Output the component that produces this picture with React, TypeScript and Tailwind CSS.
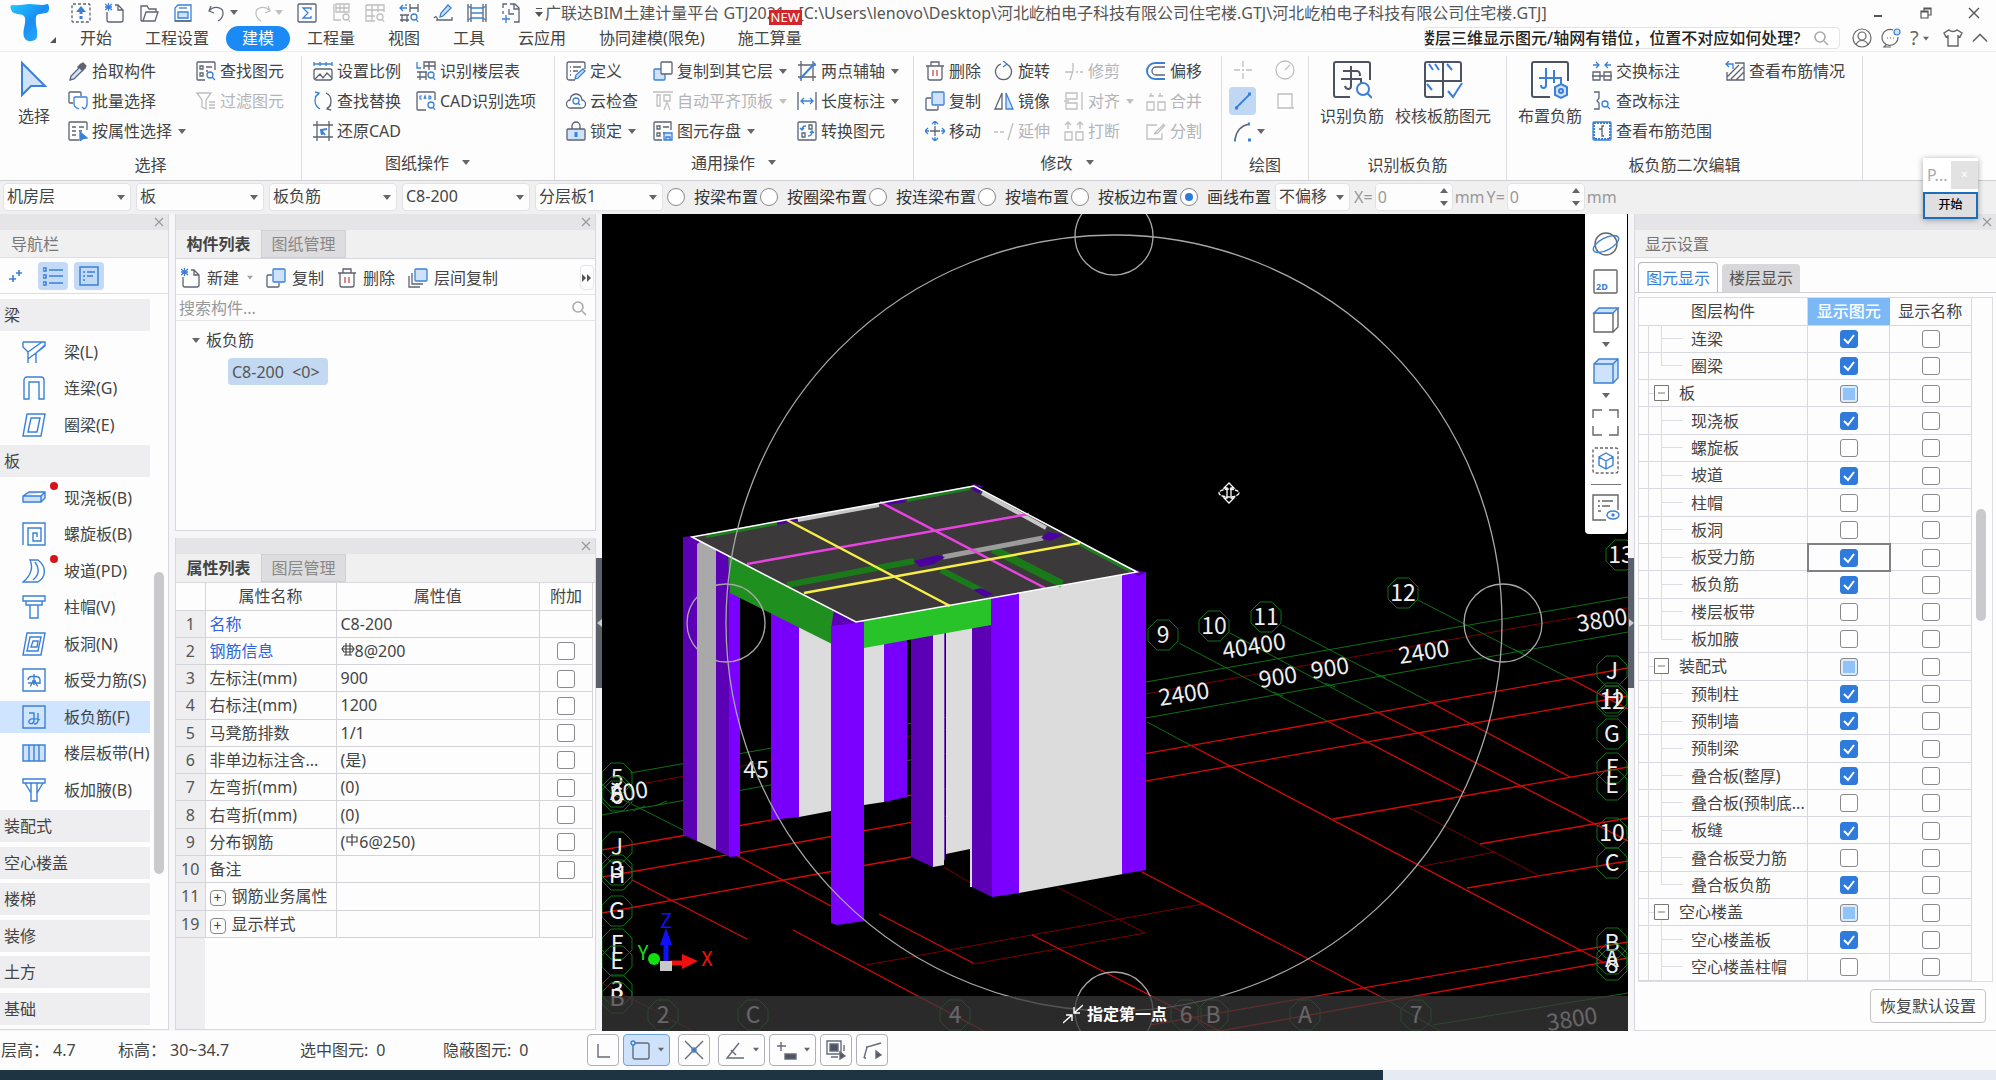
import { useState, type ReactNode } from "react"
import clsx from "clsx"

const BLUE = "#3a80d8"
const PALE = "#cfe2fb"

const icons: Record<string, ReactNode> = {
  upload: (
    <>
      <rect x="1" y="1" width="18" height="18" rx="1" strokeDasharray="3 2" />
      <path d="M10 16v-3M10 11V8" stroke={BLUE} strokeWidth="3" />
      <path d="M5 9l5-6 5 6z" fill={BLUE} stroke="none" />
    </>
  ),
  newFile: (
    <>
      <path d="M2 9v8a2 2 0 0 0 2 2h12a2 2 0 0 0 2-2V7l-5-5h-3M13 2v5h5" />
      <path d="M0 1l7 6M7 1L0 7M3.5 0v8M0 4h7" stroke={BLUE} />
    </>
  ),
  open: <path d="M2 18V3h6l2 3h7v3M2 18h14l3-9H7L4 18" />,
  save: (
    <>
      <path d="M2 18V5l3-3h13v16z" stroke={BLUE} />
      <path d="M5 9h10v6H5z" fill={PALE} stroke={BLUE} />
      <path d="M6 5h8" stroke={BLUE} />
      <path d="M2 18h16" />
    </>
  ),
  undo: <path d="M4 3L2 8l5 2M2 8c5-6 15-4 14 3-.5 4-3 6-5 7" />,
  redo: <path d="M16 3l2 5-5 2M18 8C13 2 3 4 4 11c.5 4 3 6 5 7" />,
  sigma: (
    <>
      <rect x="1" y="1" width="18" height="18" rx="1" />
      <path d="M14 7V5H6l5 5-5 5h8v-2" stroke={BLUE} />
    </>
  ),
  report: (
    <>
      <path d="M3 1v16h7M5 1h13v8H5zM9 1v8M13 1v8M5 5h13" />
      <circle cx="15" cy="14" r="3" />
      <path d="M17 16l2 3" />
    </>
  ),
  grid: (
    <>
      <path d="M1 2h18v7M1 2v16h9M1 7h18M1 13h9M7 2v16M13 2v7" />
      <circle cx="15" cy="14" r="3" />
      <path d="M17 16l2 3" />
    </>
  ),
  viewSearch: (
    <>
      <path d="M11 9V1M19 9V1M11 5h8M1 12h9M3 19v-7M8 19v-7M1 17h9" />
      <path d="M1 5h7M4 2L1 5l3 3M7 1v2" stroke={BLUE} />
      <circle cx="15" cy="14" r="3" stroke={BLUE} />
      <path d="M17 16l2 3" stroke={BLUE} />
    </>
  ),
  pen: (
    <>
      <path d="M7 14l1-4 7-8 3 3-8 8z" stroke={BLUE} fill={PALE} />
      <path d="M1 15c2-3 4 0 3 2h15v-3" />
    </>
  ),
  film: (
    <>
      <path d="M4 1v18M16 1v18M1 1v18M19 1v18" />
      <path d="M4 5h12M4 10h12M4 15h12M1 3l3 2M16 5l3-2M1 17l3-2M16 15l3 2" stroke={BLUE} />
    </>
  ),
  addFile: (
    <>
      <path d="M6 1H2v4M2 8v3M9 1h5l4 4v14h-5M13 1v5h5" />
      <path d="M5 12v8M1 16h8" stroke={BLUE} />
      <path d="M8 6v5h5" />
    </>
  ),
  picker: (
    <>
      <path d="M12 3l5 5M10 5l5 5" strokeWidth="3" />
      <path d="M15 2l3 3-3 3-3-3z" fill="currentColor" />
      <path d="M11 7l-8 8-1 4 4-1 8-8" fill={PALE} />
    </>
  ),
  batch: (
    <>
      <path d="M5 12H2a1 1 0 0 1-1-1V2a1 1 0 0 1 1-1h10a1 1 0 0 1 1 1v3" />
      <path d="M11 18c-3-1-5-2-5-5V7a1 1 0 0 1 1-1h11a1 1 0 0 1 1 1v6c0 3-1 4-3 5l-2-2" stroke={BLUE} />
    </>
  ),
  byProp: (
    <>
      <path d="M11 19H2a1 1 0 0 1-1-1V2a1 1 0 0 1 1-1h16a1 1 0 0 1 1 1v7M4 6h4M11 6h5M4 10h4M11 10h3M4 14h4" />
      <path d="M12 11l7 6-4 .500-3 2.500z" fill={BLUE} stroke={BLUE} />
    </>
  ),
  findItem: (
    <>
      <path d="M9 19H2a1 1 0 0 1-1-1V2a1 1 0 0 1 1-1h16a1 1 0 0 1 1 1v7M4 5h3v3H4zM4 12h3v3H4zM10 6h6M10 10h2" />
      <circle cx="14" cy="14" r="3" stroke={BLUE} />
      <path d="M16 16l3 3" stroke={BLUE} />
    </>
  ),
  filter: <path d="M1 2h14l-5 7v9l-4-2V9zM13 11h6M13 14h6M13 17h6" />,
  scale: (
    <>
      <rect x="1" y="8" width="18" height="11" rx="2" />
      <path d="M2 18l5-5 3 4 4-5 5 5" />
      <path d="M1 1v4M19 1v4M1 3h18M7 1v4M13 1v4" stroke={BLUE} />
    </>
  ),
  replace: (
    <>
      <path d="M13 2c7 3 6 13 1 15M18 14l-4 4 4 1" />
      <path d="M7 18C0 14 1 5 6 3M2 6l4-4-4-1" stroke={BLUE} />
    </>
  ),
  restoreCad: (
    <>
      <path d="M4 0v20M16 0v4M0 4h20M0 16h20M16 4v16" />
      <path d="M9 14l-1-5 6-1M8 9l4 5" stroke={BLUE} strokeWidth="2" />
    </>
  ),
  floorTable: (
    <>
      <path d="M8 8V1h11v8M8 5h11M13 1v8M1 11h10M4 11v8M1 16h9M10 11v8" />
      <path d="M1 1v6h4" stroke={BLUE} />
      <circle cx="15" cy="14" r="3" stroke={BLUE} />
      <path d="M17 16l2 3" stroke={BLUE} />
    </>
  ),
  cad: (
    <>
      <path d="M10 19H2a1 1 0 0 1-1-1V2a1 1 0 0 1 1-1h16a1 1 0 0 1 1 1v7" />
      <path d="M6 5H4v3h2M8 8l1-3 1 3M13 5v3h1q2-1.500 0-3z" stroke={BLUE} strokeWidth="1.200" />
      <circle cx="15" cy="14" r="3" stroke={BLUE} />
      <path d="M17 16l2 3" stroke={BLUE} />
    </>
  ),
  define: (
    <>
      <path d="M9 19H3a2 2 0 0 1-2-2V3a2 2 0 0 1 2-2h14a2 2 0 0 1 2 2v5M4 6h1M7 6h8M4 10h1M7 10h5M4 14h1" />
      <path d="M9 18l1-4 7-6 2 2-7 7z" stroke={BLUE} fill={PALE} />
    </>
  ),
  cloud: (
    <>
      <path d="M5 17a4 4 0 0 1-1-8 6 6 0 0 1 12 0 4 4 0 0 1-1 8z" />
      <circle cx="10" cy="10" r="3" stroke={BLUE} />
      <path d="M12 12l2 2" stroke={BLUE} />
    </>
  ),
  lock: (
    <>
      <path d="M6 8V5a4 4 0 0 1 8 0v3" />
      <rect x="1" y="8" width="18" height="11" rx="1" fill={PALE} />
      <path d="M10 11v5" stroke={BLUE} strokeWidth="3" />
    </>
  ),
  copyFloor: (
    <>
      <rect x="1" y="8" width="11" height="11" rx="1" fill={PALE} stroke={BLUE} />
      <rect x="8" y="1" width="11" height="12" rx="1" fill="#fff" />
    </>
  ),
  alignTop: <path d="M0 1h20M4 4h3v11H4zM11 4h6v6h-6zM11 19l3-8 3 8" />,
  saveItem: (
    <>
      <path d="M9 19H2a1 1 0 0 1-1-1V2a1 1 0 0 1 1-1h16v8M4 5h3v3H4zM4 12h3v3H4zM10 6h6M10 12h2" />
      <path d="M11 12h8v7h-8zM13 19v-3h4v3" stroke={BLUE} fill={PALE} />
    </>
  ),
  twoAxis: (
    <>
      <path d="M4 0v20M16 0v20M1 4h18M1 16h18" />
      <path d="M3 18L18 2" stroke={BLUE} strokeWidth="2" />
    </>
  ),
  length: (
    <>
      <path d="M1 1v18M19 1v18" />
      <path d="M4 10h12M7 7l-3 3 3 3M13 7l3 3-3 3" stroke={BLUE} />
    </>
  ),
  convert: (
    <>
      <rect x="1" y="1" width="18" height="18" rx="1" />
      <path d="M12 4h3v4h-3zM5 12h3v4H5z" />
      <path d="M9 5c-3 0-4 1-4 4M3 7l2 2 2-2M11 15c3 0 4-1 4-4M13 12l2-2 2 2" stroke={BLUE} />
    </>
  ),
  trash: (
    <>
      <path d="M1 5h18M6 5V1h8v4M3 5v12a2 2 0 0 0 2 2h10a2 2 0 0 0 2-2V5" />
      <path d="M8 9v6M12 9v6" stroke="#c94a4a" />
    </>
  ),
  copy: (
    <>
      <path d="M6 7H2a1 1 0 0 0-1 1v10a1 1 0 0 0 1 1h10a1 1 0 0 0 1-1v-3" />
      <rect x="7" y="1" width="12" height="13" rx="1" fill={PALE} stroke={BLUE} />
    </>
  ),
  layerCopy: (
    <>
      <path d="M1 8v11h11M4 5v11h11" />
      <rect x="7" y="1" width="12" height="12" rx="1" fill={PALE} stroke={BLUE} />
    </>
  ),
  move: (
    <>
      <path d="M10 5v10M5 10h10" />
      <path d="M10 0v4M7 3l3-3 3 3M10 20v-4M7 17l3 3 3-3M0 10h4M3 7l-3 3 3 3M20 10h-4M17 7l3 3-3 3" stroke={BLUE} />
    </>
  ),
  rotate: (
    <>
      <path d="M12 3a8 8 0 1 1-5 0" />
      <path d="M9 0l4 3-4 3" stroke={BLUE} />
    </>
  ),
  mirror: (
    <>
      <path d="M8 2v16H1z" />
      <path d="M12 2v16h7z" fill={PALE} stroke={BLUE} />
    </>
  ),
  trim: <path d="M1 11h8M12 11h2M16 11h3M9 2v8L6 19" />,
  extend: <path d="M0 11h4M6 11h4M19 2l-5 17" />,
  align: <path d="M2 2h11v6H2zM2 12h11v6H2zM18 1v18M0 10h5" />,
  breakIt: <path d="M1 11h7v8H1zM12 11h7v8h-7zM4 2v6M16 2v6M1 4l3-3 3 3M13 4l3-3 3 3" />,
  offset: (
    <>
      <path d="M19 2H9a7 7 0 0 0 0 16h10" stroke={BLUE} strokeWidth="2" />
      <path d="M19 6H10a4 4 0 0 0 0 8h9" />
    </>
  ),
  merge: <path d="M1 11h7v8H1zM12 11h7v8h-7zM5 2v3M14 2v3M3 5h5M12 5h5" />,
  split: <path d="M11 4H1v14h15v-6M8 13L18 3M8 13l4-1 7-8" />,
  swap: (
    <>
      <path d="M1 11h7v8H1zM12 11h7v8h-7zM0 15h20" />
      <path d="M1 4h6M4 1l3 3-3 3M19 4h-6M16 1l-3 3 3 3" stroke={BLUE} />
    </>
  ),
  checkMark: (
    <>
      <path d="M2 1h5v6l-2 3 2 2v6H2" />
      <circle cx="13" cy="13" r="3" stroke={BLUE} />
      <path d="M15 15l3 3" stroke={BLUE} />
    </>
  ),
  range: (
    <>
      <rect x="1" y="1" width="18" height="18" rx="1" stroke={BLUE} />
      <rect x="2" y="2" width="16" height="16" stroke={BLUE} strokeWidth="2" strokeDasharray="2 1" />
      <path d="M12 5h-2v10h2M7 8h3" />
    </>
  ),
  rebarView: (
    <>
      <path d="M10 2h9v17H2v-8M6 18L18 6M11 19l8-8M2 16l12-12" />
      <path d="M1 3h7v5M4 0L1 3l3 3" stroke={BLUE} />
    </>
  ),
  pointTool: <path d="M10 1v6M10 13v6M1 10h6M13 10h6M9 10h2" />,
  circleTool: (
    <>
      <circle cx="10" cy="10" r="9" />
      <path d="M10 10l5-5" />
    </>
  ),
  lineTool: (
    <>
      <path d="M3 17L17 3" stroke={BLUE} strokeWidth="1.8" />
      <path d="M2 17h3M15 3h3" stroke={BLUE} strokeWidth="3" />
    </>
  ),
  rectTool: <path d="M3 3h14v14H3zM3 15v3M15 17h4" />,
  arcTool: (
    <>
      <path d="M2 18C3 9 7 4 16 2" />
      <path d="M1 18h2M15 2h2M15 18h3" stroke={BLUE} strokeWidth="3" />
    </>
  ),
}

const bigIcons: Record<string, ReactNode> = {
  cursor: <path d="M8 3v32l9-9h14z" fill={PALE} stroke={BLUE} />,
  recognize: (
    <>
      <path d="M18 37H4a2 2 0 0 1-2-2V4a2 2 0 0 1 2-2h32a2 2 0 0 1 2 2v16M11 11h14c2 0 3 2 3 5M9 19h20v5M19 6v20c0 4-5 4-6 0" />
      <circle cx="31" cy="29" r="6" stroke={BLUE} />
      <path d="M35 33l5 5" stroke={BLUE} />
    </>
  ),
  verify: (
    <>
      <path d="M20 37H4a2 2 0 0 1-2-2V4a2 2 0 0 1 2-2h32a2 2 0 0 1 2 2v17H2M20 2v35" />
      <path d="M6 4l4 6M12 4l4 6M24 4l5 6M4 24l5 6M25 31l5 6 9-14" stroke={BLUE} />
    </>
  ),
  place: (
    <>
      <path d="M20 37H4a2 2 0 0 1-2-2V4a2 2 0 0 1 2-2h32a2 2 0 0 1 2 2v17" />
      <path d="M9 18h22v6M16 8v17c0 4-5 4-5 0M24 10v13" stroke={BLUE} />
      <path d="M31 24l6 3v8l-6 3-6-3v-8z" stroke={BLUE} fill={PALE} />
      <circle cx="31" cy="31" r="2" stroke={BLUE} />
    </>
  ),
}

const navIcons: Record<string, ReactNode> = {
  beam: <path d="M1 2h22v4l-9 7v10M1 2v5l5 5v11M6 12L20 2M14 13l9-8M6 19l8-6" />,
  link: <path d="M2 23V4a3 3 0 0 1 3-3h14a3 3 0 0 1 3 3v19h-5V6H7v17z" />,
  ring: <path d="M5 1h18l-4 22H1zM9 5h9l-3 14H6z" />,
  slab: <path d="M1 10l6-4h16v6l-4 4H1zM1 10h18l4-4M19 10v6" fill={PALE} />,
  spiral: <path d="M1 23V1h22v22H6V6h13v13h-8v-8h4v4" />,
  ramp: <path d="M8 1h8c9 7 8 17 0 22H1C10 16 11 7 8 1zM13 3c5 7 4 13-2 18" />,
  cap: <path d="M1 1h22v5H1zM4 6v4h16V6M8 10v13h8V10" />,
  hole: <path d="M5 1h18l-4 22H1zM8 5h11l-3 14H5zM11 9h5l-1 6H9z" />,
  force: <path d="M1 1h22v22H1zM6 12c0-5 12-5 12 0v4M12 6v11M6 15h12M8 18c2 0 2-6 4-6s2 6 4 6" />,
  negative: <path d="M1 1h22v22H1zM7 8h5v8c-1 4-6 3-5 0s8-3 11-1M16 8v7c0 3-2 4-4 4" />,
  strip: <path d="M1 4h22v16H1zM12 4v16M7 4v16M17 4v16" fill={PALE} />,
  haunch: <path d="M1 1h22v4H1zM3 5l6 10M21 5l-6 10M9 5v18h6V5" />,
}

const Icon = ({ name, disabled }: { name: string; disabled?: boolean }) => (
  <svg
    viewBox="0 0 20 20"
    className={clsx("h-5 w-5 shrink-0 text-[#5d6372]", disabled && "opacity-40 grayscale")}
    fill="none"
    stroke="currentColor"
    strokeWidth="1.3"
    aria-hidden
  >
    {icons[name]}
  </svg>
)

const BigIcon = ({ name }: { name: string }) => (
  <svg viewBox="0 0 40 40" className="h-10 w-10 text-[#4d5362]" fill="none" stroke="currentColor" strokeWidth="2" aria-hidden>
    {bigIcons[name]}
  </svg>
)

const Caret = ({ className }: { className?: string }) => (
  <svg viewBox="0 0 8 5" className={clsx("h-[5px] shrink-0 fill-[#666]", className ?? "w-2")} aria-hidden>
    <path d="M0 0h8L4 5z" />
  </svg>
)

const CloseIcon = () => (
  <svg viewBox="0 0 10 10" className="h-2.5 w-2.5 stroke-[#999]" strokeWidth="1.2" aria-hidden>
    <path d="M1 1l8 8M9 1L1 9" />
  </svg>
)

const SearchIcon = () => (
  <svg viewBox="0 0 16 16" className="h-4 w-4 shrink-0 stroke-[#aaa]" fill="none" strokeWidth="1.6" aria-hidden>
    <circle cx="7" cy="7" r="5" />
    <path d="M11 11l4 4" />
  </svg>
)

type Item = { icon: string; label: string; caret?: boolean; disabled?: boolean }

const Tool = ({ icon, label, caret, disabled }: Item) => (
  <button
    type="button"
    disabled={disabled}
    className={clsx("flex h-[30px] items-center gap-1 whitespace-nowrap", disabled ? "text-[#b4b4b8]" : "text-[#444]")}
  >
    <Icon name={icon} disabled={disabled} />
    {label}
    {caret && <Caret className={clsx("ml-0.5 w-2", disabled && "opacity-40")} />}
  </button>
)

const BigTool = ({ icon, label, className }: { icon: string; label: string; className?: string }) => (
  <button type="button" className={clsx("flex shrink-0 flex-col items-center self-start whitespace-nowrap pt-1 text-[#444]", className)}>
    <BigIcon name={icon} />
    <span className="mt-0.5 leading-7">{label}</span>
  </button>
)

const Column = ({ items, className }: { items: Item[]; className?: string }) => (
  <div className={clsx("shrink-0", className)}>
    {items.map((item) => (
      <Tool key={item.label} {...item} />
    ))}
  </div>
)

const Group = ({
  label,
  caret,
  className,
  inner,
  children,
}: {
  label: string
  caret?: boolean
  className: string
  inner?: string
  children: ReactNode
}) => (
  <section className={clsx("mt-1 flex shrink-0 flex-col border-r border-[#dcdce0]", className)}>
    <div className={clsx("flex h-[90px] shrink-0", inner)}>{children}</div>
    <div className={clsx("flex h-[33px] shrink-0 items-center justify-center gap-3 text-[#444]", !caret && "pt-1")}>
      {label}
      {caret && <Caret className="w-2.5" />}
    </div>
  </section>
)

const quickLeft = ["upload", "newFile", "open", "save"]
const quickRight = [
  { icon: "sigma" },
  { icon: "report", disabled: true },
  { icon: "grid", disabled: true },
  { icon: "viewSearch" },
  { icon: "pen" },
  { icon: "film" },
  { icon: "addFile" },
]

const tabs = ["开始", "工程设置", "建模", "工程量", "视图", "工具", "云应用", "协同建模(限免)", "施工算量"]

const Header = () => {
  const [activeTab, setActiveTab] = useState("建模")

  return (
    <header className="flex h-[52px] border-b border-[#eeeef0] bg-[#fdfdfe]">
      <div className="relative w-16 shrink-0">
        <svg viewBox="0 0 40 40" className="ml-2.5 mt-1 h-10 w-10" aria-label="logo">
          <defs>
            <linearGradient id="logo" x1="0" y1="0" x2="1" y2="1">
              <stop offset="0" stopColor="#1fc8ff" />
              <stop offset="0.5" stopColor="#1a8df5" />
              <stop offset="1" stopColor="#28b8ff" />
            </linearGradient>
          </defs>
          <path
            d="M2 1c6 1 12-1 18-1s12 2 17 0c3 0 3 9-1 9-4 1-9 0-10 4-1 8 2 13 1 20-1 5-11 6-13 0-2-6 2-12 1-19-1-5-7-3-11-5C1 8-1 1 2 1z"
            fill="url(#logo)"
          />
        </svg>
        <svg viewBox="0 0 6 6" className="absolute bottom-2 right-2 h-1.5 w-1.5 fill-[#555]" aria-hidden>
          <path d="M6 0v6H0z" />
        </svg>
      </div>

      <div className="flex min-w-0 flex-1 flex-col">
        <div className="flex h-[26px] items-center pl-[7px]">
          <div className="flex shrink-0 items-center gap-3.5">
            {quickLeft.map((name) => (
              <button key={name} type="button" aria-label={name}>
                <Icon name={name} />
              </button>
            ))}
            <button type="button" aria-label="undo" className="flex items-center gap-[3px]">
              <Icon name="undo" />
              <Caret />
            </button>
            <button type="button" aria-label="redo" disabled className="flex items-center gap-[3px]">
              <Icon name="redo" disabled />
              <Caret className="w-2 opacity-40" />
            </button>
            {quickRight.map(({ icon, disabled }) => (
              <button key={icon} type="button" aria-label={icon} disabled={disabled}>
                <Icon name={icon} disabled={disabled} />
              </button>
            ))}
            <svg viewBox="0 0 8 9" className="h-[9px] w-2 fill-[#555]" aria-hidden>
              <path d="M1 0h6v1H1zM0 4h8L4 9z" />
            </svg>
          </div>
          <h1 className="ml-0.5 min-w-0 flex-1 truncate leading-6 text-[#555]">
            广联达BIM土建计量平台 GTJ2021 -
            [C:\Users\lenovo\Desktop\河北屹柏电子科技有限公司住宅楼.GTJ\河北屹柏电子科技有限公司住宅楼.GTJ]
          </h1>
          <div className="flex shrink-0 items-center gap-9 pr-4 text-[#555]">
            <button type="button" aria-label="minimize">
              <svg viewBox="0 0 12 12" className="h-3 w-3 stroke-current" strokeWidth="2">
                <path d="M2 9h8" />
              </svg>
            </button>
            <button type="button" aria-label="restore">
              <svg viewBox="0 0 12 12" className="h-3 w-3 stroke-current" fill="none" strokeWidth="1.2">
                <path d="M1 4h7v7H1zM4 4V1h7v7H8M4 2h7M1 5h7" />
              </svg>
            </button>
            <button type="button" aria-label="close">
              <svg viewBox="0 0 12 12" className="h-3 w-3 stroke-current" strokeWidth="1.4">
                <path d="M1 1l10 10M11 1L1 11" />
              </svg>
            </button>
          </div>
        </div>

        <div className="flex h-[26px] items-center">
          <nav className="flex shrink-0 gap-px">
            {tabs.map((tab) => (
              <button
                key={tab}
                type="button"
                onClick={() => setActiveTab(tab)}
                className={clsx(
                  "relative h-[25px] rounded-full px-4 leading-6",
                  tab === activeTab ? "bg-[#1c8af5] text-white" : "text-[#444]",
                )}
              >
                {tab}
                {tab === "施工算量" && (
                  <span className="absolute -top-4 right-4 bg-[#d3262c] px-0.5 text-[13px] leading-[15px] text-white">NEW</span>
                )}
              </button>
            ))}
          </nav>
          <div className="ml-auto flex h-[22px] w-[416px] items-center overflow-hidden rounded-sm border border-[#e4e4e8] bg-white pr-2.5">
            <input
              aria-label="search help"
              defaultValue="楼层三维显示图元/轴网有错位，位置不对应如何处理?"
              className="min-w-0 flex-1 indent-[-6px] font-medium text-[#222] outline-none"
            />
            <SearchIcon />
          </div>
          <div className="flex shrink-0 items-center gap-[9px] pl-3 pr-2 text-[#666]">
            <svg viewBox="0 0 20 20" className="h-5 w-5 stroke-current" fill="none" strokeWidth="1.2">
              <circle cx="10" cy="10" r="9" />
              <circle cx="10" cy="8" r="4" />
              <path d="M4 17c2-6 10-6 12 0" />
            </svg>
            <svg viewBox="0 0 20 20" className="h-5 w-5 stroke-current" fill="none" strokeWidth="1.2">
              <path d="M12 2A8 8 0 1 0 17 9M5 17l-2 2h7M6 10h1M9 10h1M12 10h1" />
              <circle cx="16" cy="4" r="3" stroke={BLUE} fill={PALE} />
            </svg>
            <span className="flex w-6 items-center gap-1 text-xl">
              ?<Caret className="w-1.5" />
            </span>
            <svg viewBox="0 0 20 20" className="h-5 w-5 stroke-current" fill="none" strokeWidth="1.4">
              <path d="M6 2c2 2 6 2 8 0l5 3-2 4-2-1v10H5V8L3 9 1 5z" />
            </svg>
            <svg viewBox="0 0 18 10" className="h-2.5 w-4 stroke-current" fill="none" strokeWidth="1.8">
              <path d="M1 9l8-8 8 8" />
            </svg>
          </div>
        </div>
      </div>
    </header>
  )
}

const DrawGroup = () => (
  <div className="grid h-[90px] grid-cols-[27px_57px] text-[#444]">
    <button type="button" aria-label="point" disabled className="flex items-center justify-center">
      <Icon name="pointTool" disabled />
    </button>
    <button type="button" aria-label="circle" disabled className="flex items-center justify-center">
      <Icon name="circleTool" disabled />
    </button>
    <button type="button" aria-label="line" className="my-0.5 flex items-center justify-center rounded-sm bg-[#c0d8f4]">
      <Icon name="lineTool" />
    </button>
    <button type="button" aria-label="rectangle" disabled className="flex items-center justify-center">
      <Icon name="rectTool" disabled />
    </button>
    <button type="button" aria-label="arc" className="flex items-center gap-1 pl-1">
      <Icon name="arcTool" />
      <Caret />
    </button>
  </div>
)

const Ribbon = () => (
  <div className="flex h-[129px] overflow-hidden border-b border-[#cfcfd4] bg-[#fdfdfe]">
    <Group label="选择" className="w-[302px]">
      <BigTool icon="cursor" label="选择" className="w-[68px]" />
      <Column
        className="w-32"
        items={[
          { icon: "picker", label: "拾取构件" },
          { icon: "batch", label: "批量选择" },
          { icon: "byProp", label: "按属性选择", caret: true },
        ]}
      />
      <Column items={[{ icon: "findItem", label: "查找图元" }, { icon: "filter", label: "过滤图元", disabled: true }]} />
    </Group>
    <Group label="图纸操作" caret className="w-[253px]" inner="pl-[11px]">
      <Column
        className="w-[103px]"
        items={[
          { icon: "scale", label: "设置比例" },
          { icon: "replace", label: "查找替换" },
          { icon: "restoreCad", label: "还原CAD" },
        ]}
      />
      <Column items={[{ icon: "floorTable", label: "识别楼层表" }, { icon: "cad", label: "CAD识别选项" }]} />
    </Group>
    <Group label="通用操作" caret className="w-[359px]" inner="pl-[11px]">
      <Column
        className="w-[87px]"
        items={[
          { icon: "define", label: "定义" },
          { icon: "cloud", label: "云检查" },
          { icon: "lock", label: "锁定", caret: true },
        ]}
      />
      <Column
        className="w-36"
        items={[
          { icon: "copyFloor", label: "复制到其它层", caret: true },
          { icon: "alignTop", label: "自动平齐顶板", caret: true, disabled: true },
          { icon: "saveItem", label: "图元存盘", caret: true },
        ]}
      />
      <Column
        items={[
          { icon: "twoAxis", label: "两点辅轴", caret: true },
          { icon: "length", label: "长度标注", caret: true },
          { icon: "convert", label: "转换图元" },
        ]}
      />
    </Group>
    <Group label="修改" caret className="w-[308px]" inner="pl-[11px]">
      <Column
        className="w-[69px]"
        items={[
          { icon: "trash", label: "删除" },
          { icon: "copy", label: "复制" },
          { icon: "move", label: "移动" },
        ]}
      />
      <Column
        className="w-[70px]"
        items={[
          { icon: "rotate", label: "旋转" },
          { icon: "mirror", label: "镜像" },
          { icon: "extend", label: "延伸", disabled: true },
        ]}
      />
      <Column
        className="w-[82px]"
        items={[
          { icon: "trim", label: "修剪", disabled: true },
          { icon: "align", label: "对齐", caret: true, disabled: true },
          { icon: "breakIt", label: "打断", disabled: true },
        ]}
      />
      <Column
        items={[
          { icon: "offset", label: "偏移" },
          { icon: "merge", label: "合并", disabled: true },
          { icon: "split", label: "分割", disabled: true },
        ]}
      />
    </Group>
    <Group label="绘图" className="w-[87px]" inner="pl-[7px]">
      <DrawGroup />
    </Group>
    <Group label="识别板负筋" className="w-[198px]" inner="pl-2.5">
      <BigTool icon="recognize" label="识别负筋" className="w-[66px]" />
      <BigTool icon="verify" label="校核板筋图元" className="ml-2 w-[100px]" />
    </Group>
    <Group label="板负筋二次编辑" className="w-[356px]" inner="pl-2.5">
      <BigTool icon="place" label="布置负筋" className="w-[66px]" />
      <Column
        className="ml-[9px] w-[133px]"
        items={[
          { icon: "swap", label: "交换标注" },
          { icon: "checkMark", label: "查改标注" },
          { icon: "range", label: "查看布筋范围" },
        ]}
      />
      <Column items={[{ icon: "rebarView", label: "查看布筋情况" }]} />
    </Group>
  </div>
)

const Dropdown = ({ value, label, className }: { value: string; label: string; className: string }) => (
  <div className={clsx("relative h-7", className)}>
    <select
      aria-label={label}
      className="h-full w-full appearance-none rounded border border-[#e2e2e6] bg-[#fdfdfe] pb-0.5 pl-[3px] pr-5 text-[#444]"
    >
      <option>{value}</option>
    </select>
    <Caret className="pointer-events-none absolute right-1.5 top-3 w-2" />
  </div>
)

const Spin = ({ label }: { label: string }) => (
  <div className="flex items-center gap-0.5 text-[#999]">
    <label htmlFor={`offset-${label}`}>{label}=</label>
    <div className="flex h-7 w-[78px] items-center rounded border border-[#e2e2e6] bg-[#fdfdfe] pl-0.5 pr-1">
      <input id={`offset-${label}`} defaultValue="0" className="w-full min-w-0 outline-none" />
      <div className="flex flex-col gap-2">
        <Caret className="w-2 rotate-180" />
        <Caret className="w-2" />
      </div>
    </div>
    mm
  </div>
)

const layouts = ["按梁布置", "按圈梁布置", "按连梁布置", "按墙布置", "按板边布置", "画线布置"]

const OptionsBar = () => {
  const [layout, setLayout] = useState("画线布置")

  return (
    <div className="flex h-[33px] items-center overflow-hidden whitespace-nowrap bg-[#f0f0f1] pb-0.5 pl-[3px]">
      <div className="flex shrink-0 gap-[5px]">
        <Dropdown label="楼层" value="机房层" className="w-32" />
        <Dropdown label="类别" value="板" className="w-32" />
        <Dropdown label="类型" value="板负筋" className="w-32" />
        <Dropdown label="构件" value="C8-200" className="w-32" />
        <Dropdown label="分层" value="分层板1" className="w-32" />
      </div>
      <div className="ml-1 flex shrink-0 gap-0.5 text-[#333]">
        {layouts.map((name) => (
          <label key={name} className="flex items-center gap-[9px]">
            <input
              type="radio"
              name="layout"
              checked={layout === name}
              onChange={() => setLayout(name)}
              className="flex h-[18px] w-[18px] appearance-none items-center justify-center rounded-full border border-[#888] bg-white checked:before:h-2 checked:before:w-2 checked:before:rounded-full checked:before:bg-[#2f7bdc] checked:before:content-['']"
            />
            {name}
          </label>
        ))}
      </div>
      <Dropdown label="偏移" value="不偏移" className="mx-1 w-[75px] shrink-0" />
      <Spin label="X" />
      <div className="w-0.5 shrink-0" />
      <Spin label="Y" />
    </div>
  )
}

const PanelBar = () => (
  <div className="flex h-4 shrink-0 items-center justify-end bg-[#e5e4e7] pr-1">
    <button type="button" aria-label="close panel">
      <CloseIcon />
    </button>
  </div>
)

type NavEntry = { label: string; icon?: string; dot?: boolean }

const navEntries: NavEntry[] = [
  { label: "梁" },
  { label: "梁(L)", icon: "beam" },
  { label: "连梁(G)", icon: "link" },
  { label: "圈梁(E)", icon: "ring" },
  { label: "板" },
  { label: "现浇板(B)", icon: "slab", dot: true },
  { label: "螺旋板(B)", icon: "spiral" },
  { label: "坡道(PD)", icon: "ramp", dot: true },
  { label: "柱帽(V)", icon: "cap" },
  { label: "板洞(N)", icon: "hole" },
  { label: "板受力筋(S)", icon: "force" },
  { label: "板负筋(F)", icon: "negative" },
  { label: "楼层板带(H)", icon: "strip" },
  { label: "板加腋(B)", icon: "haunch" },
  { label: "装配式" },
  { label: "空心楼盖" },
  { label: "楼梯" },
  { label: "装修" },
  { label: "土方" },
  { label: "基础" },
]

const NavPanel = () => {
  const [selected, setSelected] = useState("板负筋(F)")

  return (
    <aside className="flex w-[169px] shrink-0 flex-col border-b border-r border-[#d8d8dc] bg-[#fdfdfe]">
      <PanelBar />
      <h2 className="h-7 border-b border-[#dedee2] bg-[#f0f0f1] pl-[11px] leading-7 text-[#777]">导航栏</h2>
      <div className="flex h-9 items-center gap-1.5 border-b border-[#dedee2] pl-2">
        <svg viewBox="0 0 16 16" className="mr-2 h-4 w-4" stroke={BLUE} strokeWidth="1.6">
          <path d="M5 7v7M1 11h7M11 2v6M8 5h6" />
        </svg>
        <button type="button" aria-label="list view" className="flex h-7 w-[30px] items-center justify-center rounded bg-[#c3daf6]">
          <svg viewBox="0 0 20 20" className="h-5 w-5" fill="none" stroke={BLUE} strokeWidth="1.5">
            <path d="M0 2h3v3H0zM0 9h3v3H0zM0 16h3v3H0zM6 4h14M6 10h14M6 17h14" />
          </svg>
        </button>
        <button type="button" aria-label="detail view" className="flex h-7 w-[30px] items-center justify-center rounded bg-[#c3daf6]">
          <svg viewBox="0 0 20 20" className="h-5 w-5" fill="none" stroke={BLUE} strokeWidth="1.5">
            <path d="M1 1h18v18H1zM4 6h2M8 6h8M4 10h2M8 10h6M4 14h2" />
          </svg>
        </button>
      </div>
      <div className="flex flex-1 pb-0.5 pt-[3px]">
        <ul className="flex w-[150px] flex-col">
          {navEntries.map(({ label, icon, dot }) => (
            <li key={label} className="flex flex-1 py-0.5">
              <button
                type="button"
                onClick={() => icon && setSelected(label)}
                className={clsx(
                  "flex h-8 w-full items-center whitespace-nowrap text-[#444]",
                  !icon && "bg-[#eeedef] pl-1",
                  icon && "pl-[22px]",
                  selected === label && "bg-[#cfe4ff]",
                )}
              >
                {icon && (
                  <span className="relative mr-[18px]">
                    <svg viewBox="0 0 24 24" className="h-6 w-6" fill="none" stroke={BLUE} strokeWidth="1.4">
                      {navIcons[icon]}
                    </svg>
                    {dot && <span className="absolute -right-3 -top-1 h-2 w-2 rounded-full bg-[#d8121a]" />}
                  </span>
                )}
                {label}
              </button>
            </li>
          ))}
        </ul>
        <div className="mb-[153px] ml-1 mt-[275px] w-2.5 rounded-full bg-[#c9c8cb]" />
      </div>
    </aside>
  )
}

const PanelTabs = ({ names }: { names: string[] }) => (
  <div className="flex h-[29px] shrink-0 border-b border-[#d8d8dc] bg-[#f0f0f1]">
    {names.map((name, i) => (
      <button
        key={name}
        type="button"
        className={clsx("w-[85px] text-center", i === 0 ? "font-bold text-[#444]" : "border border-[#d0d0d3] bg-[#dddcde] text-[#888]")}
      >
        {name}
      </button>
    ))}
  </div>
)

const Checkbox = ({ label, state = "off" }: { label: string; state?: "on" | "off" | "mixed" }) => (
  <span className="relative inline-flex align-middle">
    <input
      type="checkbox"
      aria-label={label}
      defaultChecked={state === "on"}
      className={clsx(
        "peer h-[18px] w-[18px] appearance-none rounded-[3px] border border-[#8a8a8e] checked:border-[#2f7bdc] checked:bg-[#2f7bdc]",
        state === "mixed" ? "border-[#6d9dd0] bg-[#90c3f8] shadow-[inset_0_0_0_2px_#dcecfd]" : "bg-white",
      )}
    />
    <svg
      viewBox="0 0 18 18"
      className="pointer-events-none absolute inset-0 hidden stroke-white peer-checked:block"
      fill="none"
      strokeWidth="2"
      aria-hidden
    >
      <path d="M4 9l4 4 6-8" />
    </svg>
  </span>
)

const ComponentPanel = () => (
  <section className="flex h-[317px] flex-col border-x border-b border-[#d8d8dc] bg-[#fdfdfe]">
    <PanelBar />
    <PanelTabs names={["构件列表", "图纸管理"]} />
    <div className="flex h-9 items-center border-b border-[#e4e4e8] pl-[5px] pr-px pt-0.5 text-[#444]">
      <button type="button" className="flex items-center gap-1.5">
        <Icon name="newFile" />
        新建
        <Caret className="ml-0.5 w-1.5 opacity-60" />
      </button>
      <button type="button" className="ml-[13px] flex items-center gap-1.5">
        <Icon name="copy" />
        复制
      </button>
      <button type="button" className="ml-[13px] flex items-center gap-1.5">
        <Icon name="trash" />
        删除
      </button>
      <button type="button" className="ml-[13px] flex items-center gap-1.5">
        <Icon name="layerCopy" />
        层间复制
      </button>
      <button type="button" aria-label="more" className="ml-auto flex h-[25px] w-3.5 items-center justify-center rounded border border-[#e6e6ea]">
        <svg viewBox="0 0 10 8" className="h-2 w-2.5 fill-[#555]">
          <path d="M0 0l4 4-4 4zM5 0l4 4-4 4z" />
        </svg>
      </button>
    </div>
    <div className="flex h-[26px] items-center border-b border-[#e4e4e8] pl-[3px] pr-2">
      <input aria-label="搜索构件" placeholder="搜索构件..." className="min-w-0 flex-1 outline-none placeholder:text-[#999]" />
      <SearchIcon />
    </div>
    <div className="pl-4 pt-[7px] text-[#444]">
      <div className="flex h-6 items-center gap-1.5">
        <Caret />
        板负筋
      </div>
      <button type="button" className="ml-9 mt-1.5 h-[27px] whitespace-pre rounded bg-[#c3d8f1] pl-1 pr-2 text-[#555]">
        {"C8-200  <0>"}
      </button>
    </div>
  </section>
)

type Property = { no: number; name: string; value?: ReactNode; blue?: boolean; attach?: boolean; group?: boolean }

const RebarMark = ({ ribbed }: { ribbed?: boolean }) => (
  <svg viewBox="0 0 14 14" className="inline h-3.5 w-3.5 stroke-[#444] align-baseline" fill="none" strokeWidth="1.2" aria-hidden>
    {ribbed ? <path d="M3 3h8l2 3-2 3H3L1 6zM1 6h12M5 0v12M9 0v12M3 12h8" /> : <path d="M2 3h10v5H2zM7 0v12" />}
  </svg>
)

const properties: Property[] = [
  { no: 1, name: "名称", value: "C8-200", blue: true },
  { no: 2, name: "钢筋信息", value: <><RebarMark ribbed />8@200</>, blue: true, attach: true },
  { no: 3, name: "左标注(mm)", value: "900", attach: true },
  { no: 4, name: "右标注(mm)", value: "1200", attach: true },
  { no: 5, name: "马凳筋排数", value: "1/1", attach: true },
  { no: 6, name: "非单边标注含...", value: "(是)", attach: true },
  { no: 7, name: "左弯折(mm)", value: "(0)", attach: true },
  { no: 8, name: "右弯折(mm)", value: "(0)", attach: true },
  { no: 9, name: "分布钢筋", value: <>(<RebarMark />6@250)</>, attach: true },
  { no: 10, name: "备注", attach: true },
  { no: 11, name: "钢筋业务属性", group: true },
  { no: 19, name: "显示样式", group: true },
]

const PropertyPanel = () => (
  <section className="mt-[7px] flex flex-1 flex-col border-x border-b border-[#d8d8dc] bg-[#fdfdfe]">
    <PanelBar />
    <PanelTabs names={["属性列表", "图层管理"]} />
    <table className="h-[355px] w-[417px] table-fixed border-collapse whitespace-nowrap leading-5 text-[#444]">
      <colgroup>
        <col className="w-[29px]" />
        <col className="w-[131px]" />
        <col />
        <col className="w-[53px]" />
      </colgroup>
      <thead>
        <tr className="h-[27px] border-b border-[#d4d4d8]">
          <th className="border-r border-[#d4d4d8] p-0" />
          <th className="border-r border-[#d4d4d8] p-0 font-normal">属性名称</th>
          <th className="border-r border-[#d4d4d8] p-0 font-normal">属性值</th>
          <th className="border-r border-[#d4d4d8] p-0 font-normal">附加</th>
        </tr>
      </thead>
      <tbody>
        {properties.map(({ no, name, value, blue, attach, group }) => (
          <tr key={no} className="h-[27px] border-b border-[#d4d4d8]">
            <td className="border-r border-[#d4d4d8] bg-[#eeedef] p-0 text-center text-[#555]">{no}</td>
            <td className={clsx("border-r border-[#d4d4d8] py-0 pl-1", blue && "text-[#2f62e0]")}>
              {group && (
                <button
                  type="button"
                  aria-label={`展开${name}`}
                  className="mr-1.5 inline-flex h-4 w-4 items-center justify-center rounded-sm border border-[#888] align-middle text-sm leading-none"
                >
                  +
                </button>
              )}
              {name}
            </td>
            <td className="border-r border-[#d4d4d8] py-0 pl-1">{value}</td>
            <td className="border-r border-[#d4d4d8] p-0 text-center leading-none">{attach && <Checkbox label={name} />}</td>
          </tr>
        ))}
      </tbody>
    </table>
    <div className="w-[29px] flex-1 bg-[#eeedef]" />
  </section>
)

const reds = [
  "M602 850L1628 668",
  "M602 877L1628 696",
  "M602 913L911 857",
  "M632 880L747 939",
  "M736 855L831 906",
  "M879 914L973 963",
  "M793 930L984 1031",
  "M1032 935L1220 1031",
  "M1142 872L1387 1000",
  "M1192 746L1603 962",
  "M1327 721L1465 793",
  "M1377 712L1628 841",
  "M1430 702L1570 777",
  "M1567 677L1628 709",
  "M1333 819L1628 767",
  "M1480 844L1628 818",
  "M1467 888L1628 861",
  "M1150 1025L1628 942",
  "M1220 1031L1628 958",
]

const dimReds = [
  "M646 783L1628 608",
  "M1408 807L1538 875",
  "M1423 866L1495 852",
  "M866 965L1203 904",
  "M973 964L1145 933L1057 887",
  "M944 867L972 884",
  "M602 983L693 1031",
]

const greens = [
  "M630 773L1628 597",
  "M602 815L1628 632",
  "M610 793L683 830",
  "M1147 722L1192 746",
  "M1179 643L1327 721",
  "M1230 633L1377 712",
  "M1282 625L1430 702",
  "M1418 600L1567 677",
  "M1387 1000L1440 1031",
  "M1433 1025L1628 993",
  "M1273 692l10 4M1325 683l10 4M1376 674l10 4M1513 649l10 4M633 811l12-5M655 806l12-5",
]

const bubbles: [string, number, number][] = [
  ["9", 1163, 635],
  ["10", 1214, 626],
  ["11", 1266, 617],
  ["12", 1403, 593],
  ["13", 1621, 555],
  ["J", 1612, 671],
  ["H", 1612, 698],
  ["12", 1612, 701],
  ["G", 1612, 734],
  ["F", 1612, 768],
  ["E", 1612, 785],
  ["10", 1612, 833],
  ["C", 1612, 863],
  ["B", 1612, 943],
  ["A", 1612, 959],
  ["8", 1612, 965],
  ["5", 617, 778],
  ["A", 617, 792],
  ["6", 617, 796],
  ["J", 617, 847],
  ["3", 617, 870],
  ["H", 617, 875],
  ["G", 617, 911],
  ["F", 617, 944],
  ["E", 617, 961],
  ["3", 617, 990],
  ["B", 617, 998],
  ["2", 663, 1015],
  ["C", 753, 1015],
  ["4", 955, 1015],
  ["6", 1186, 1015],
  ["B", 1213, 1015],
  ["A", 1305, 1015],
  ["7", 1416, 1015],
]

const dimensions: [string, number, number][] = [
  ["2400", 1184, 694],
  ["900", 1278, 677],
  ["900", 1330, 668],
  ["40400", 1254, 646],
  ["2400", 1424, 652],
  ["3800", 1602, 620],
  ["3800", 1572, 1019],
  ["500", 629, 792],
]

const Building = () => (
  <g>
    {/* rear columns and walls */}
    <path d="M683 537l14 0v304l-14-6z" fill="#5c00b6" />
    <path d="M697 538l19 12v300l-19-9z" fill="#a9a9a9" />
    <path d="M716 550l14 6v301l-14-7z" fill="#5c00b6" />
    <path d="M729 590l11 6v260l-11 1z" fill="#7b00ff" />
    <path d="M771 610l28 15v192l-28 3z" fill="#7800fa" />
    <path d="M799 625l32 16v170l-32 6z" fill="#dcdcdc" />
    <path d="M864 645l20-4v161l-20 3z" fill="#dcdcdc" />
    <path d="M884 642l23-4v159l-23 5z" fill="#7800fa" />
    <path d="M911 636l22-4v235l-22-10z" fill="#5c00b6" />
    <path d="M933 632h11v233l-11 2z" fill="#dcdcdc" />
    <path d="M946 631l26-5v261h-2v-38l-24 5z" fill="#dcdcdc" />
    <path d="M944.500 630v230" stroke="#7a3cc0" />
    <path d="M972 625l20-4v276l-20-10z" fill="#5c00b6" />
    {/* beams */}
    <path d="M728 555l106 54v36l-104-52z" fill="#1f901f" />
    <path d="M856 621l135-24v28l-127 23h-8z" fill="#28c328" />
    <path d="M834 609l22 13 8 0v4l-33 3z" fill="#5c00b6" />
    {/* front columns and wall */}
    <path d="M831 626l33-4v299l-27 4-6-2z" fill="#7b00ff" />
    <path d="M991 597l28-5v301l-27 4z" fill="#7b00ff" />
    <path d="M1019 592l104-20v302l-104 19z" fill="#dcdcdc" />
    <path d="M1122 573l24-1v298l-24 4z" fill="#7b00ff" />
    <path d="M683 537l9-1 8 6-3 2zM968 487l6-3 10 3zM1128 567l18 6-8 3z" fill="#5c00b6" />
    {/* roof slab */}
    <path d="M692 537L974 486L1137 572L856 622z" fill="#3b393a" />
    <path d="M706 536L777 523M907 500L970 488" stroke="#1f7d1f" strokeWidth="4" />
    <path d="M777 523L797 519M882 504L905 500M973 488L980 492" stroke="#4b00a0" strokeWidth="4" />
    <path d="M798 520L879 505M982 493L1046 528" stroke="#c8c8c8" strokeWidth="4" />
    <path d="M1071 539L1131 571" stroke="#1f7d1f" strokeWidth="4" />
    <path d="M787 585L914 561M941 570L982 591" stroke="#1a7a1a" strokeWidth="6" />
    <path d="M993 549L1062 584" stroke="#1a7a1a" strokeWidth="8" />
    <path d="M943 557L1043 538" stroke="#9c9c9c" strokeWidth="5" />
    <path d="M914 561l23-6 8 2-11 7-14 3zM1041 538l7-6 16 3-14 6zM973 590l8-2 12 6-8 3z" fill="#4b00a0" />
    <path d="M747 564L1029 514M880 502L1045 588" stroke="#e843e0" strokeWidth="2.500" />
    <path d="M787 520L950 606M804 593L1080 543" stroke="#f7ee48" strokeWidth="2.500" />
    <path d="M692 537L974 486L1137 572L856 622z" fill="none" stroke="#fff" strokeWidth="1.500" />
  </g>
)

const octagon = "M-6 -15h12l9 9v12l-9 9h-12l-9 -9v-12z"

const Scene = () => (
  <svg
    viewBox="602 214 1026 817"
    preserveAspectRatio="xMidYMid slice"
    className="absolute inset-0 h-full w-full font-['Noto_Sans_CJK_SC','Noto_Sans',sans-serif]"
    fill="none"
  >
    {dimReds.map((d) => (
      <path key={d} d={d} stroke="#7a0000" />
    ))}
    {greens.map((d) => (
      <path key={d} d={d} stroke="#0e7016" />
    ))}
    {reds.map((d) => (
      <path key={d} d={d} stroke="#d40a0a" strokeWidth="1.3" />
    ))}
    <Building />
    {bubbles.map(([text, x, y]) => (
      <g key={`${text}-${x}-${y}`} transform={`translate(${x} ${y})`}>
        <path d={octagon} stroke="#0e7016" />
        <text y="8" textAnchor="middle" fill="#eee" fontSize="23">
          {text}
        </text>
      </g>
    ))}
    {dimensions.map(([text, x, y]) => (
      <text key={`${text}-${x}`} transform={`translate(${x} ${y}) rotate(-9)`} y="8" textAnchor="middle" fill="#eee" fontSize="23">
        {text}
      </text>
    ))}
    <text x="756" y="778" textAnchor="middle" fill="#eee" fontSize="23">
      45
    </text>
    <g stroke="#a8a8a8" strokeWidth="1.3">
      <circle cx="1114" cy="623" r="388" />
      <circle cx="1114" cy="236" r="39" />
      <circle cx="726" cy="623" r="39" />
      <circle cx="1503" cy="623" r="39" />
      <circle cx="1114" cy="1011" r="39" />
    </g>
    <g fontSize="20" textAnchor="middle">
      <path d="M666 962v-18" stroke="#1010ff" strokeWidth="5" />
      <path d="M666 928l6 17h-12z" fill="#1010ff" />
      <path d="M670 963h15" stroke="#f01010" strokeWidth="5" />
      <path d="M698 961l-16 -7v15z" fill="#f01010" />
      <circle cx="654" cy="959" r="6" fill="#10e010" />
      <path d="M660 961h12v10h-12z" fill="#c8c8c8" />
      <text x="666" y="928" fill="#1010ff">Z</text>
      <text x="707" y="966" fill="#f01010">X</text>
      <text x="643" y="960" fill="#10e010">Y</text>
    </g>
    <g stroke="#fff" strokeWidth="1.3">
      <path d="M1229 483l5 5h-3v10h3l-5 5-5-5h3v-10h-3z" />
      <ellipse cx="1229" cy="493" rx="10" ry="4" strokeDasharray="4 1" />
    </g>
  </svg>
)

const viewTools: { name: string; drawing: ReactNode; caret?: boolean }[] = [
  {
    name: "orbit",
    drawing: (
      <>
        <circle cx="14" cy="13" r="11" />
        <ellipse cx="14" cy="13" rx="14" ry="6" transform="rotate(-28 14 13)" stroke={BLUE} />
      </>
    ),
  },
  {
    name: "2D",
    drawing: (
      <>
        <rect x="2" y="1" width="23" height="23" rx="1" />
        <text x="4" y="21" fontSize="9" fontWeight="700" fill={BLUE} stroke="none">
          2D
        </text>
      </>
    ),
  },
  {
    name: "cube",
    caret: true,
    drawing: (
      <>
        <path d="M2 6h19v19H2zM21 25l5-5V1" />
        <path d="M2 6l5-5h19l-5 5z" stroke={BLUE} fill={PALE} />
      </>
    ),
  },
  { name: "solid", caret: true, drawing: <path d="M2 6h19v19H2zM2 6l5-5h19v19l-5 5M21 6l5-5" stroke={BLUE} fill={PALE} /> },
  { name: "fit", drawing: <path d="M1 9V1h9M17 1h9v8M26 17v9h-9M10 26H1v-9" /> },
  {
    name: "select box",
    drawing: (
      <>
        <rect x="1" y="1" width="25" height="25" rx="2" strokeDasharray="3 2" />
        <path d="M14 6l7 4v8l-7 4-7-4v-8zM7 10l7 4 7-4M14 14v8" stroke={BLUE} />
      </>
    ),
  },
]

const Viewport = () => (
  <main className="relative min-w-0 flex-1 overflow-hidden bg-black">
    <Scene />
    <div className="absolute inset-x-0 bottom-0 flex h-[35px] items-center justify-center gap-1 bg-[#3a383a]/75 font-bold text-white">
      <svg viewBox="0 0 20 20" className="h-5 w-5" fill="none" stroke="#fff" strokeWidth="1.4">
        <path d="M20 1l-9 8M11 3v6h6M0 19l9-8M3 11h6v6" />
      </svg>
      指定第一点
    </div>
    <div className="absolute right-px top-0 flex w-[42px] flex-col items-center rounded-b bg-white pb-3 pt-4">
      {viewTools.map(({ name, drawing, caret }) => (
        <button key={name} type="button" aria-label={name} className={clsx("flex flex-col items-center", caret ? "h-[51px]" : "h-[38px]")}>
          <svg viewBox="-1 -1 30 29" className="h-[29px] w-[30px]" fill="none" stroke="#666" strokeWidth="1.4">
            {drawing}
          </svg>
          {caret && <Caret className="mt-[7px] w-2" />}
        </button>
      ))}
      <hr className="mb-2 w-[30px] border-[#777]" />
      <button type="button" aria-label="view settings">
        <svg viewBox="-1 -1 30 29" className="h-[29px] w-[30px]" fill="none" stroke="#666" strokeWidth="1.4">
          <path d="M14 26H1V1h25v15M6 7h2M10 7h11M6 12h2M10 12h8M6 17h3" />
          <ellipse cx="21" cy="21" rx="6" ry="4" stroke={BLUE} />
          <circle cx="21" cy="21" r="1" stroke={BLUE} />
        </svg>
      </button>
    </div>
  </main>
)

const Splitter = ({ flip }: { flip?: boolean }) => (
  <div className="flex w-1.5 shrink-0 flex-col bg-[#f6f6f8] pt-[344px]">
    <button type="button" aria-label="toggle panel" className="flex h-[130px] items-center justify-center bg-[#5b606c]">
      <svg viewBox="0 0 5 8" className={clsx("h-2 w-[5px] fill-[#ccc]", flip && "rotate-180")}>
        <path d="M5 0v8L0 4z" />
      </svg>
    </button>
  </div>
)

type Layer = { name: string; state: "on" | "off" | "mixed"; parent?: boolean; last?: boolean }

const layers: Layer[] = [
  { name: "连梁", state: "on" },
  { name: "圈梁", state: "on", last: true },
  { name: "板", state: "mixed", parent: true },
  { name: "现浇板", state: "on" },
  { name: "螺旋板", state: "off" },
  { name: "坡道", state: "on" },
  { name: "柱帽", state: "off" },
  { name: "板洞", state: "off" },
  { name: "板受力筋", state: "on" },
  { name: "板负筋", state: "on" },
  { name: "楼层板带", state: "off" },
  { name: "板加腋", state: "off", last: true },
  { name: "装配式", state: "mixed", parent: true },
  { name: "预制柱", state: "on" },
  { name: "预制墙", state: "on" },
  { name: "预制梁", state: "on" },
  { name: "叠合板(整厚)", state: "on" },
  { name: "叠合板(预制底...", state: "off" },
  { name: "板缝", state: "on" },
  { name: "叠合板受力筋", state: "off" },
  { name: "叠合板负筋", state: "on", last: true },
  { name: "空心楼盖", state: "mixed", parent: true },
  { name: "空心楼盖板", state: "on" },
  { name: "空心楼盖柱帽", state: "off" },
]

const TreeLines = ({ parent, last }: { parent?: boolean; last?: boolean }) => (
  <svg viewBox="0 0 52 27" className="h-[27px] w-[52px] shrink-0" fill="none" stroke="#dcdce2">
    <path d="M9.500 0v27" />
    {parent ? <path d="M9 13.500h6M22.500 21v6" /> : <path d={last ? "M22.500 0v13.500h21" : "M22.500 0v27M22.500 13.500h21"} />}
    {parent && <path d="M15.500 5.500h14v15h-14zM19 13h7" stroke="#777" fill="#fff" />}
  </svg>
)

const DisplayPanel = () => (
  <aside className="flex w-[362px] shrink-0 flex-col border-b border-l border-[#d8d8dc] bg-[#fdfdfe]">
    <PanelBar />
    <h2 className="h-7 border-b border-[#dedee2] bg-[#f0f0f1] pl-2.5 leading-7 text-[#777]">显示设置</h2>
    <div className="mt-1 flex h-[31px] items-end gap-1 border-b border-[#d0d0d4] pl-[3px]">
      <button type="button" className="h-[30px] w-20 rounded-t border border-b-0 border-[#b8b8bc] text-[#3a80d8]">
        图元显示
      </button>
      <button type="button" className="h-7 w-[78px] rounded-t bg-[#d8d7d9] text-[#555]">
        楼层显示
      </button>
    </div>
    <div className="mx-[3px] mt-1 flex border border-[#dcdce0]">
      <table className="h-[683px] flex-1 table-fixed border-collapse whitespace-nowrap leading-5 text-[#444]">
        <colgroup>
          <col />
          <col className="w-[82px]" />
          <col className="w-[82px]" />
        </colgroup>
        <thead>
          <tr className="h-[27px] border-b border-[#d8d8e0]">
            <th className="border-r border-[#d8d8e0] p-0 font-normal">图层构件</th>
            <th className="bg-[#7db8f6] p-0 font-medium text-white">显示图元</th>
            <th className="border-r border-[#d8d8e0] p-0 font-normal">显示名称</th>
          </tr>
        </thead>
        <tbody>
          {layers.map(({ name, state, parent, last }) => (
            <tr key={name} className="h-[27px] border-b border-[#d8d8e0]">
              <td className="border-r border-[#d8d8e0] p-0">
                <div className="-my-px flex items-center">
                  <TreeLines parent={parent} last={last} />
                  <span className={clsx("truncate", parent && "-ml-3")}>{name}</span>
                </div>
              </td>
              <td
                className={clsx(
                  "border-r border-[#d8d8e0] p-0 text-center leading-none",
                  name === "板受力筋" && "outline-2 -outline-offset-1 outline-[#808084]",
                )}
              >
                <Checkbox label={`${name} 显示图元`} state={state} />
              </td>
              <td className="border-r border-[#d8d8e0] p-0 text-center leading-none">
                <Checkbox label={`${name} 显示名称`} />
              </td>
            </tr>
          ))}
        </tbody>
      </table>
      <div className="ml-1 mr-1.5 mt-[211px] h-28 w-2.5 shrink-0 rounded-full bg-[#cacacc]" />
    </div>
    <div className="flex flex-1 items-center justify-end pr-2.5">
      <button type="button" className="h-[34px] w-[116px] rounded border border-[#c4c4c8] text-[#444]">
        恢复默认设置
      </button>
    </div>
  </aside>
)

const snapButtons: { name: string; drawing: ReactNode; caret?: boolean; active?: boolean; className?: string }[] = [
  { name: "ortho", drawing: <path d="M5 4v13h12" /> },
  {
    name: "snap",
    caret: true,
    active: true,
    className: "mr-1",
    drawing: (
      <>
        <rect x="3" y="3" width="16" height="16" rx="2" />
        <circle cx="3" cy="3" r="2" stroke={BLUE} fill={PALE} />
      </>
    ),
  },
  {
    name: "intersection",
    className: "mr-1",
    drawing: (
      <>
        <path d="M1 1l18 18M19 1L1 19" />
        <circle cx="10" cy="10" r="2" stroke={BLUE} />
      </>
    ),
  },
  { name: "angle", caret: true, drawing: <path d="M14 3L2 18h17M6 10l5 5" /> },
  {
    name: "offset",
    caret: true,
    drawing: (
      <>
        <path d="M1 6h9M5 2v9" />
        <path d="M9 14h11v5H9z" fill="#4d5362" />
      </>
    ),
  },
  {
    name: "layers",
    drawing: (
      <>
        <path d="M1 1h14v13H1zM5 17h7M18 5v6" />
        <path d="M4 4h8v7H4z" fill="#4d5362" />
        <path d="M14 12l5 4-5 3z" fill="#4d5362" />
      </>
    ),
  },
  {
    name: "arc",
    drawing: (
      <>
        <path d="M2 18L5 7l14-4M2 18h2M4 7h2" />
        <path d="M14 11l5 4-5 3z" fill="#4d5362" />
      </>
    ),
  },
]

const StatusBar = () => (
  <footer className="flex h-[39px] shrink-0 items-center bg-[#fdfdfe] pb-0.5 text-[#444]">
    <dl className="flex w-[587px] shrink-0 whitespace-nowrap pl-px">
      <div className="flex w-[117px] gap-1">
        <dt>层高：</dt>
        <dd>4.7</dd>
      </div>
      <div className="flex w-[182px] gap-1">
        <dt>标高：</dt>
        <dd>30~34.7</dd>
      </div>
      <div className="flex w-[143px] gap-2">
        <dt>选中图元:</dt>
        <dd>0</dd>
      </div>
      <div className="flex gap-2">
        <dt>隐蔽图元:</dt>
        <dd>0</dd>
      </div>
    </dl>
    <div className="flex gap-1">
      {snapButtons.map(({ name, drawing, caret, active, className }) => (
        <button
          key={name}
          type="button"
          aria-label={name}
          className={clsx(
            "flex h-8 items-center justify-center gap-2 rounded border",
            caret ? "w-[47px]" : "w-8",
            active ? "border-[#6ba3e8] bg-[#cfe2fb]" : "border-[#b0b0b6]",
            className,
          )}
        >
          <svg viewBox="0 0 20 20" className="h-5 w-5 overflow-visible" fill="none" stroke="#666b78" strokeWidth="1.4">
            {drawing}
          </svg>
          {caret && <Caret className="w-1.5" />}
        </button>
      ))}
    </div>
  </footer>
)

const StartWindow = () => (
  <div className="absolute right-[18px] top-[158px] w-[55px] bg-white shadow-[0_1px_6px_rgba(0,0,0,0.35)]">
    <div className="flex h-[33px] items-center justify-between pl-1 text-[#aaa]">
      P...
      <button type="button" aria-label="close window" className="h-7 w-[27px] bg-[#e2e2e3] text-xs text-white">
        ×
      </button>
    </div>
    <button type="button" className="h-[27px] w-full border-2 border-[#1b6fb8] bg-[#dfdfe1] text-xs font-medium text-black">
      开始
    </button>
  </div>
)

const App = () => (
  <div className="relative flex min-h-screen flex-col overflow-hidden bg-[#f6f6f8] font-['Noto_Sans','Noto_Sans_CJK_SC',sans-serif] text-base">
    <Header />
    <Ribbon />
    <OptionsBar />
    <div className="flex flex-1">
      <div className="flex shrink-0 pb-px">
        <NavPanel />
        <div className="ml-1.5 flex w-[421px] flex-col">
          <ComponentPanel />
          <PropertyPanel />
        </div>
      </div>
      <Splitter />
      <Viewport />
      <Splitter flip />
      <DisplayPanel />
    </div>
    <StatusBar />
    <div className="flex h-2.5 shrink-0 bg-[#e5eaf3]">
      <div className="w-[69.3%] bg-[#1f3442]" />
    </div>
    <StartWindow />
  </div>
)

export default App
